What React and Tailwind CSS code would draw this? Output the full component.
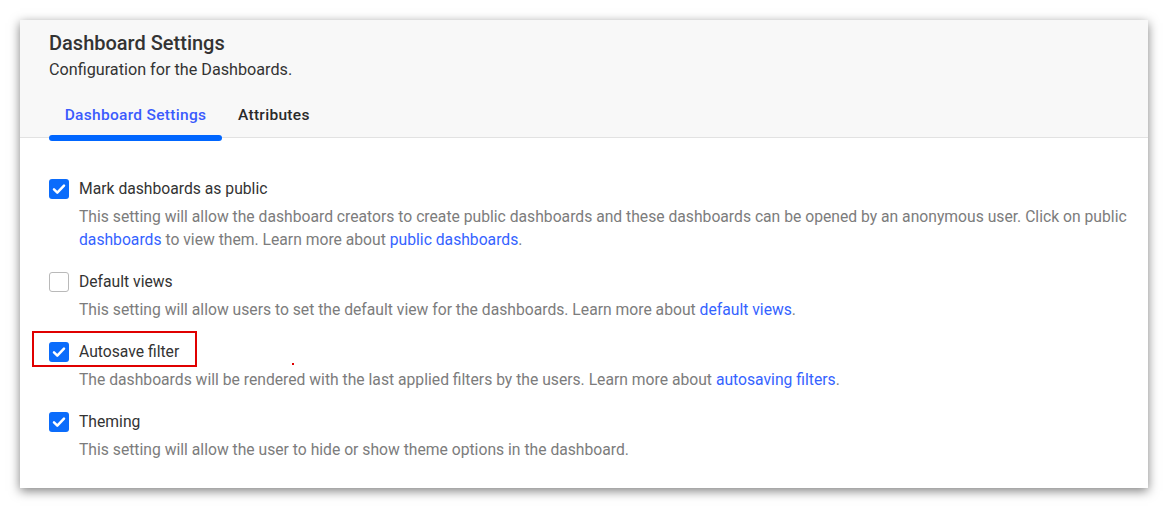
import React from "react";

function Check({ checked }) {
  if (checked) {
    return (
      <div className="w-5 h-5 shrink-0 rounded-[3px] bg-[#0b6cfb] flex items-center justify-center">
        <svg width="16" height="16" viewBox="0 0 16 16" fill="none">
          <path d="M3 8.4l3.3 3.2L13 4.6" stroke="#fff" strokeWidth="2.5" strokeLinecap="round" strokeLinejoin="round" />
        </svg>
      </div>
    );
  }
  return <div className="w-5 h-5 shrink-0 rounded-[3px] border border-[#b9b9b9] bg-white" />;
}

function Link({ children }) {
  return <span className="text-[#3563ff]">{children}</span>;
}

function Row({ checked, label, children, highlight }) {
  return (
    <div className="relative flex items-start gap-[10px]">
      {highlight && (
        <div className="absolute left-[-17px] top-[-11px] w-[165px] h-[36px] border-2 border-[#e00000]" />
      )}
      <Check checked={checked} />
      <div className="flex flex-col">
        <div className="text-[15.7px] leading-[20px] text-[#333]">{label}</div>
        <div className="mt-[6px] whitespace-nowrap text-[15.7px] leading-[23px] text-[#7c7c7c]">{children}</div>
      </div>
    </div>
  );
}

export default function App() {
  return (
    <div className="w-[1168px] h-[508px] bg-white p-5" style={{ fontFamily: "Roboto, 'Noto Sans', sans-serif" }}>
      <div className="relative w-[1128px] h-[468px] bg-white shadow-[0_3px_10px_rgba(0,0,0,0.5)]">
        <div className="bg-[#f8f8f8] border-b border-[#e2e2e2] px-[29px] pt-[11px]">
          <div className="text-[20px] leading-[24px] font-medium text-[#333]">Dashboard Settings</div>
          <div className="mt-[5px] text-[16.2px] leading-[20px] text-[#333]">Configuration for the Dashboards.</div>
          <div className="mt-[13px] flex">
            <div className="relative w-[173px] py-[12px] text-center text-[15.5px] leading-[20px] font-medium tracking-[0.3px] text-[#3b5bfd]">
              Dashboard Settings
              <div className="absolute left-0 right-0 bottom-[-4px] h-[6px] rounded-full bg-[#0066ff]" />
            </div>
            <div className="px-4 py-[12px] text-[15.5px] leading-[20px] font-medium tracking-[0.3px] text-[#2a2a2a]">Attributes</div>
          </div>
        </div>
        <div className="pl-[29px] pt-[41px] flex flex-col gap-[21px]">
          <Row checked label="Mark dashboards as public">
            This setting will allow the dashboard creators to create public dashboards and these dashboards can be opened by an anonymous user. Click on public
            <br />
            <Link>dashboards</Link> to view them. Learn more about <Link>public dashboards</Link>.
          </Row>
          <Row checked={false} label="Default views">
            This setting will allow users to set the default view for the dashboards. Learn more about <Link>default views</Link>.
          </Row>
          <Row checked highlight label="Autosave filter">
            The dashboards will be rendered with the last applied filters by the users. Learn more about <Link>autosaving filters</Link>.
          </Row>
          <Row checked label="Theming">
            This setting will allow the user to hide or show theme options in the dashboard.
          </Row>
        </div>
        <div className="absolute left-[272px] top-[343px] w-[2px] h-[2px] bg-[#e00000]" />
      </div>
    </div>
  );
}
